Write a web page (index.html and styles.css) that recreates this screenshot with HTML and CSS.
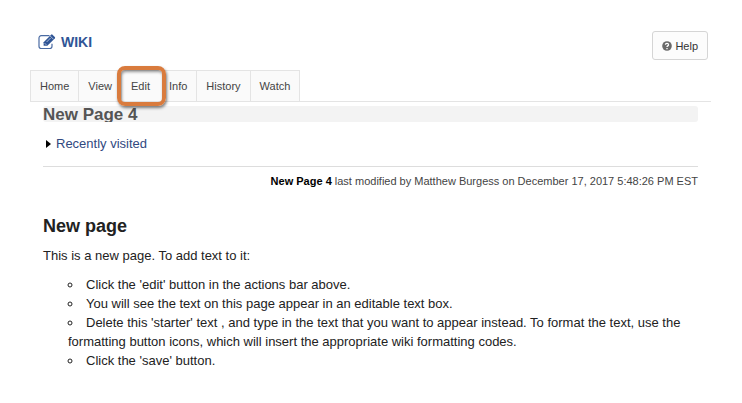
FILE: index.html
```html
<!DOCTYPE html>
<html lang="en">
  <head>
    <meta charset="utf-8">
    <title>Wiki</title>
    <link rel="stylesheet" href="styles.css">
  </head>
  <body>
    <header class="toolHeader">
      <h1 class="toolTitle">
        <svg class="iconEdit" viewBox="0 0 18 16" aria-hidden="true">
          <path d="M11.5 1.7H3.2A2.2 2.2 0 0 0 1 3.9v8.4a2.2 2.2 0 0 0 2.2 2.2h8.6a2.2 2.2 0 0 0 2.2-2.2V9.8" fill="none" stroke="#4a6ba3" stroke-width="1.2"/>
          <path d="M5.6 11.8V8.2L13.1.7a1 1 0 0 1 1.4 0l2.3 2.3a1 1 0 0 1 0 1.4l-7.5 7.4z" fill="#2f5596"/>
          <path d="M6.6 9.1l1.8 1.8M8.6 8l4-4M12.1 1.9l3.4 3.4" stroke="#fff" stroke-width=".6"/>
        </svg>
        WIKI
      </h1>
      <button class="help" type="button">
        <svg class="iconHelp" viewBox="0 0 10 10" aria-hidden="true">
          <circle cx="5" cy="5" r="4.8" fill="#6a6a6a"/>
          <path d="M3.4 3.8C3.5 1.9 6.6 2 6.5 3.9 6.4 4.9 5 4.9 5 6.1M5 7v1.2" fill="none" stroke="#fff" stroke-width="1.3"/>
        </svg>
        Help
      </button>
    </header>

    <nav>
      <ul class="tabs">
        <li><a href="#">Home</a></li>
        <li><a href="#">View</a></li>
        <li class="marked"><a href="#">Edit</a></li>
        <li><a href="#">Info</a></li>
        <li><a href="#">History</a></li>
        <li><a href="#">Watch</a></li>
      </ul>
    </nav>

    <main>
      <h2 class="pageTitle">New Page 4</h2>
      <div class="recent">
        <svg class="arrow" viewBox="0 0 5 8" aria-hidden="true"><path d="M0 0l5 4-5 4z"/></svg>
        <a href="#">Recently visited</a>
      </div>
      <p class="modified"><strong>New Page 4</strong> last modified by Matthew Burgess on December 17, 2017 5:48:26 PM EST</p>

      <h3>New page</h3>
      <p>This is a new page. To add text to it:</p>
      <ul class="steps">
        <li>Click the 'edit' button in the actions bar above.</li>
        <li>You will see the text on this page appear in an editable text box.</li>
        <li>Delete this 'starter' text , and type in the text that you want to appear instead. To format the text, use the formatting button icons, which will insert the appropriate wiki formatting codes.</li>
        <li>Click the 'save' button.</li>
      </ul>
    </main>
  </body>
</html>
```

FILE: styles.css
```css
body { margin: 0; padding: 31px 31px 0 30px; background: #fff; color: #222; font: 13px/19px "Liberation Sans", Arial, sans-serif; }
a { color: #31497f; text-decoration: none; }
p { margin: 0; }

.toolHeader { display: flex; justify-content: space-between; align-items: flex-start; height: 39px; padding: 0 3px 0 8px; }
.toolTitle { display: flex; align-items: center; gap: 5px; margin: 2px 0 0; font-size: 14px; line-height: 18px; color: #2f5596; }
.iconEdit { width: 18px; height: 16px; }
.help {
  display: flex;
  align-items: center;
  gap: 3px;
  height: 29px;
  padding: 0 9px;
  border: 1px solid #d5d5d5;
  border-radius: 3px;
  background: #fcfcfc;
  color: #333;
  font: 11px "Liberation Sans", Arial, sans-serif;
}
.iconHelp { width: 10px; height: 10px; }

.tabs { display: flex; margin: 0; padding: 0; list-style: none; border-bottom: 1px solid #e4e4e4; }
.tabs li { position: relative; border: 1px solid #e4e4e4; border-width: 1px 1px 0 0; background: #fafafa; }
.tabs li:first-child { border-left-width: 1px; }
.tabs .marked { border-right-color: #fafafa; }
.tabs a { display: block; padding: 0 9px; font-size: 11px; line-height: 30px; color: #444; }

/* ring around the Edit tab */
.marked::after {
  content: "";
  position: absolute;
  z-index: 1;
  inset: -5px -7px -5px -5px;
  border: 4px solid #d97b3d;
  border-radius: 8px;
  box-shadow: 1px 2px 3px rgba(0, 0, 0, .5), inset 1px 2px 3px rgba(0, 0, 0, .4);
}

main { padding: 4px 13px 0; }
.pageTitle { height: 16px; margin: 0; border-radius: 3px; background: #f3f3f3; color: #555; font-size: 17px; line-height: 18px; overflow: hidden; }
.recent { display: flex; align-items: center; gap: 5px; padding: 12px 3px 13px; border-bottom: 1px solid #ddd; }
.arrow { width: 5px; height: 8px; }
.modified { padding-top: 5px; color: #444; font-size: 11px; text-align: right; }
.modified strong { color: #000; }

h3 { margin: 23px 0 8px; font-size: 18px; line-height: 24px; }
.steps { margin: 10px 0 0; padding: 0 0 0 25px; list-style: circle inside; }
```
